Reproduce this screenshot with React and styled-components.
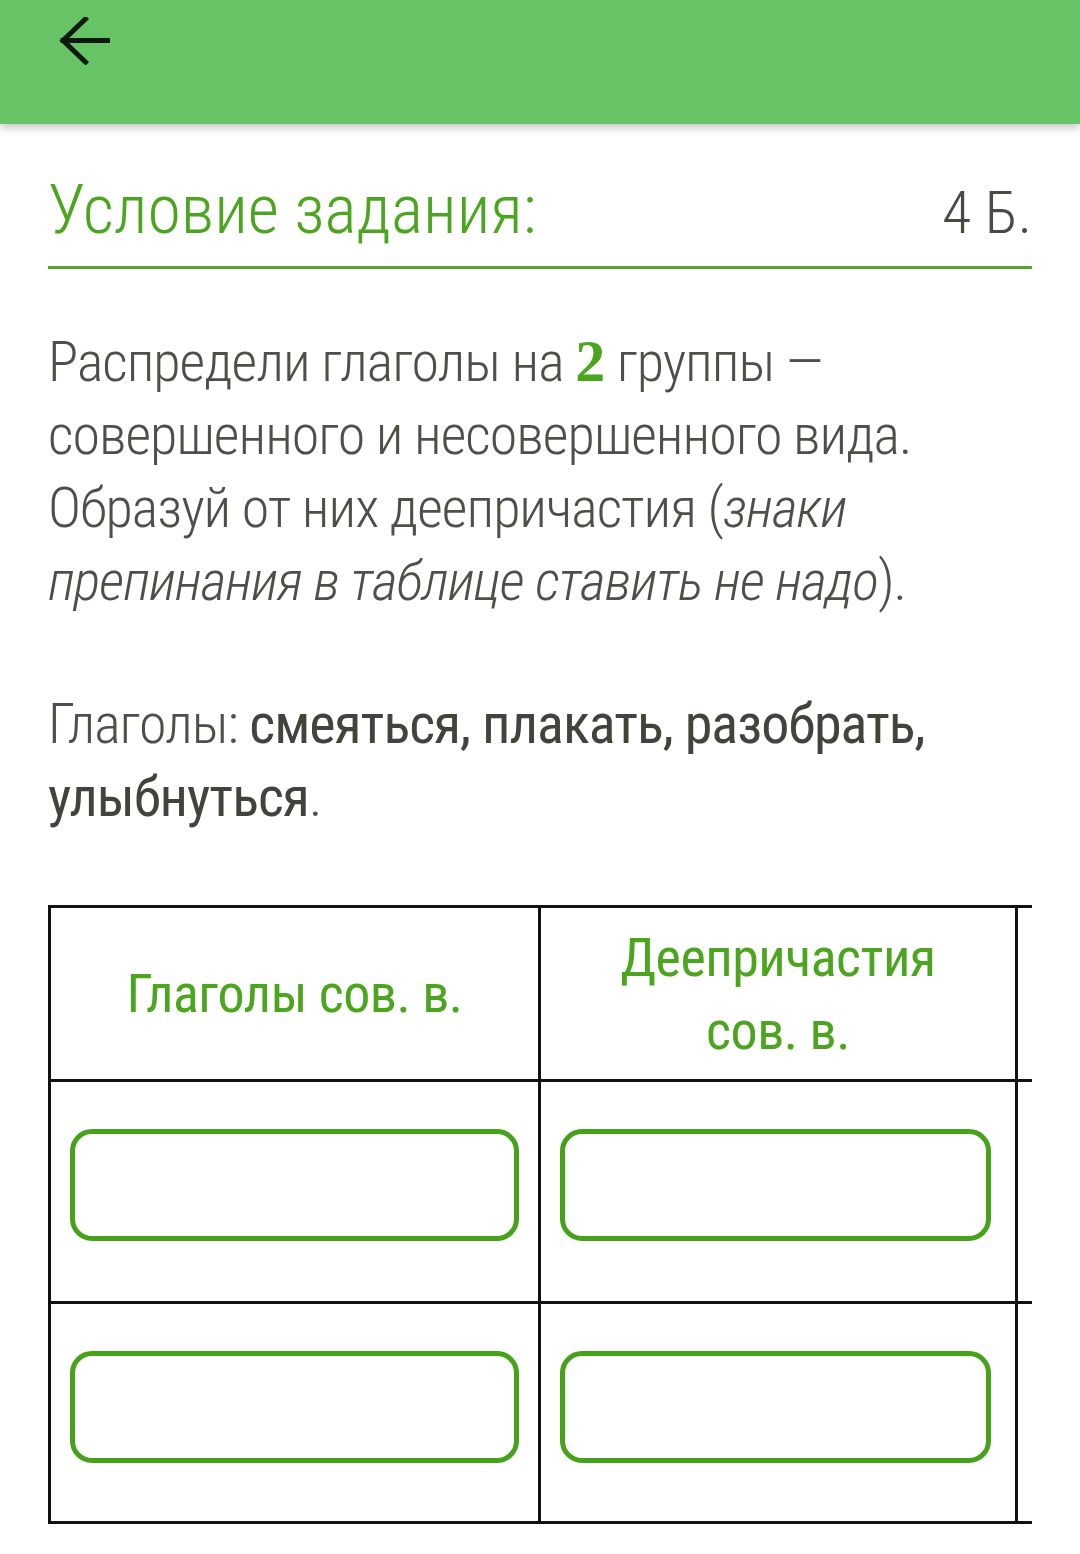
import React from 'react';
import styled, { createGlobalStyle } from 'styled-components';

const GlobalStyle = createGlobalStyle`
  html, body {
    margin: 0;
    padding: 0;
    background: #fff;
  }
  body {
    font-family: Roboto, "Noto Sans", sans-serif;
    color: #4f4f47;
  }
`;

const Page = styled.div`
  width: 1080px;
  min-height: 1554px;
  overflow: hidden;
`;

const TopBar = styled.header`
  height: 124px;
  background: #66c466;
  box-shadow: 0 4px 8px rgba(0, 0, 0, 0.22);
  padding: 17px 0 0 58px;
  box-sizing: border-box;
  position: relative;
  z-index: 1;
`;

const BackButton = styled.button`
  border: none;
  background: none;
  padding: 0;
  width: 52px;
  height: 48px;
  display: block;
  cursor: pointer;
`;

const Content = styled.main`
  padding: 0 48px;
`;

const TitleRow = styled.div`
  display: flex;
  justify-content: space-between;
  align-items: baseline;
  padding-top: 48px;
  padding-bottom: 18px;
  border-bottom: 3px solid #55a52a;
`;

const Title = styled.h1`
  margin: 0;
  font-size: 68px;
  font-weight: 300;
  line-height: 76px;
  color: #4ca51e;
  font-stretch: condensed;
`;

const Score = styled.span`
  font-size: 60px;
  font-weight: 300;
  color: #4a4a42;
  font-stretch: condensed;
`;

const Paragraph = styled.p`
  margin: 0;
  font-size: 56px;
  font-weight: 300;
  line-height: 73px;
  color: #4f4f47;
  font-stretch: condensed;
  letter-spacing: -1px;
`;

const Task = styled(Paragraph)`
  margin-top: 56px;
`;

const Verbs = styled(Paragraph)`
  margin-top: 70px;
`;

const Num = styled.span`
  font-family: "Liberation Serif", "DejaVu Serif", serif;
  font-weight: 700;
  color: #4ca51e;
  font-size: 60px;
  letter-spacing: 0;
`;

const Em = styled.i`
  font-style: italic;
`;

const Strong = styled.b`
  font-weight: 400;
  color: #43433b;
`;

const TableClip = styled.div`
  margin-top: 71px;
  width: 984px;
  overflow: hidden;
`;

const Table = styled.table`
  border-collapse: collapse;
  table-layout: fixed;
  width: 1300px;
`;

const Col = styled.col`
  width: ${(p) => p.$w}px;
`;

const HeadCell = styled.th`
  border: 3px solid #111;
  height: 171px;
  padding: 0 50px;
  font-size: 54px;
  font-weight: 400;
  line-height: 73px;
  color: #4ca51e;
  font-stretch: condensed;
  text-align: center;
  letter-spacing: -0.5px;
`;

const Cell = styled.td`
  border: 3px solid #111;
  height: ${(p) => p.$h}px;
  padding: 0 ${(p) => p.$right || 19}px 0 ${(p) => p.$left || 19}px;
  vertical-align: top;
  box-sizing: border-box;
`;

const Field = styled.input`
  display: block;
  box-sizing: border-box;
  width: 100%;
  height: 112px;
  margin-top: ${(p) => p.$top}px;
  border: 5px solid #45a21a;
  border-radius: 22px;
  background: #fff;
  font-size: 48px;
  outline: none;
`;

function BackArrow() {
  return (
    <svg width="52" height="48" viewBox="0 0 52 48" fill="none">
      <path
        d="M50 23.5H5M27.5 2L5 23.5L27.5 45"
        stroke="#0b1a0b"
        strokeWidth="5"
        strokeLinecap="square"
      />
    </svg>
  );
}

const rows = [
  { h: 222, top: 47 },
  { h: 220, top: 47 },
];

export default function App() {
  return (
    <Page>
      <GlobalStyle />
      <TopBar>
        <BackButton aria-label="Назад">
          <BackArrow />
        </BackButton>
      </TopBar>
      <Content>
        <TitleRow>
          <Title>Условие задания:</Title>
          <Score>4 Б.</Score>
        </TitleRow>

        <Task>
          Распредели глаголы на <Num>2</Num> группы — совершенного и несовершенного вида.
          Образуй от них деепричастия (<Em>знаки препинания в таблице ставить не надо</Em>).
        </Task>

        <Verbs>
          Глаголы: <Strong>смеяться, плакать, разобрать, улыбнуться</Strong>.
        </Verbs>

        <TableClip>
          <Table>
            <colgroup>
              <Col $w={490} />
              <Col $w={477} />
              <Col $w={333} />
            </colgroup>
            <thead>
              <tr>
                <HeadCell>Глаголы сов. в.</HeadCell>
                <HeadCell>Деепричастия сов. в.</HeadCell>
                <HeadCell>Глаголы несов. в.</HeadCell>
              </tr>
            </thead>
            <tbody>
              {rows.map((r, i) => (
                <tr key={i}>
                  <Cell $h={r.h}><Field $top={r.top} /></Cell>
                  <Cell $h={r.h} $right={24}><Field $top={r.top} /></Cell>
                  <Cell $h={r.h} $left={14}><Field $top={r.top} /></Cell>
                </tr>
              ))}
            </tbody>
          </Table>
        </TableClip>
      </Content>
    </Page>
  );
}
